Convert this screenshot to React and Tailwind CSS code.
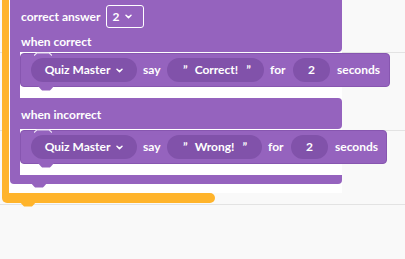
const purple = "bg-[#9563be]";

function Chevron({ className = "" }) {
  return (
    <svg width="7" height="5" viewBox="0 0 7 5" className={`shrink-0 ${className}`}>
      <path d="M1 1.2 L3.5 3.6 L6 1.2" fill="none" stroke="#fff" strokeWidth="1.5" strokeLinecap="round" strokeLinejoin="round" />
    </svg>
  );
}

function Tab({ color, className = "" }) {
  return (
    <svg width="16" height="5" viewBox="0 0 16 5" className={`absolute ${className}`}>
      <path d="M0 0 L3 3.4 Q4 4.6 5.5 4.6 L10.5 4.6 Q12 4.6 13 3.4 L16 0 Z" fill={color} />
    </svg>
  );
}

function Pill({ children, className = "" }) {
  return (
    <div className={`flex h-[24px] shrink-0 items-center justify-center whitespace-nowrap rounded-full bg-[#8152aa] ${className}`}>
      {children}
    </div>
  );
}

function SayBlock({ text, textWidth, width }) {
  return (
    <div
      className={`relative flex h-[34px] items-center whitespace-nowrap rounded-[4px] border border-[#8756b0] ${purple} pl-[10px] text-[12px] font-bold text-white`}
      style={{ width }}
    >
      <svg width="18" height="4" viewBox="0 0 18 4" className="absolute left-[13px] top-[-2px]">
        <path d="M0 3.5 L3 0.8 L15 0.8 L18 3.5" fill="none" stroke="#efe6f7" strokeWidth="1.2" />
      </svg>
      <Pill className="w-[106px]">
        <span>Quiz Master</span>
        <Chevron className="ml-[6px]" />
      </Pill>
      <span className="ml-[6px] w-[17px] shrink-0">say</span>
      <Pill className="ml-[7px]">
        <div className="flex items-center" style={{ width: textWidth }}>
          <span className="ml-[16px]">”</span>
          <span className="ml-[7px]">{text}</span>
          <span className="ml-[8px]">”</span>
        </div>
      </Pill>
      <span className="ml-[6px] w-[16px] shrink-0">for</span>
      <Pill className="ml-[7px] w-[37px]">2</Pill>
      <span className="ml-[7px] shrink-0">seconds</span>
      <Tab color="#9563be" className="left-[17px] bottom-[-5px]" />
    </div>
  );
}

export default function App() {
  return (
    <div className="relative h-[259px] w-[405px] overflow-hidden bg-[#f9f9f9] font-['Lato',sans-serif]">
      <div className="absolute left-0 right-0 top-[52px] h-px bg-[#e3e3e3]" />
      <div className="absolute left-0 right-0 top-[130px] h-px bg-[#e3e3e3]" />
      <div className="absolute left-0 right-0 top-[204px] h-px bg-[#e3e3e3]" />

      <div className="relative pl-[2px]">
        <div className="flex">
          <div className="w-[7px] shrink-0 bg-[#ffb42b]" />
          <div className="w-[333px] shrink-0 bg-white pb-[9px] pl-[1px]">
            <div className="relative w-[332px]">
              <div className={`flex h-[52px] flex-col whitespace-nowrap rounded-br-[4px] ${purple} pl-[11px] pt-[5px] text-[12px] font-bold text-white`}>
                <div className="flex h-[23px] items-center">
                  <span>correct answer</span>
                  <div className="ml-[6px] flex h-[23px] items-center rounded-[3px] border border-white pl-[5px] pr-[11px]">
                    <span>2</span>
                    <Chevron className="ml-[6px]" />
                  </div>
                </div>
                <span className="mt-[5px]">when correct</span>
              </div>

              <div className="flex">
                <div className={`w-[10px] shrink-0 ${purple}`} />
                <div className="pb-[11px] pt-[1px]">
                  <SayBlock text="Correct!" textWidth="97px" width="370px" />
                </div>
              </div>

              <div className={`flex h-[31px] items-center whitespace-nowrap rounded-r-[4px] ${purple} pl-[11px] text-[12px] font-bold text-white`}>
                <span className="mt-[2px]">when incorrect</span>
              </div>

              <div className="flex">
                <div className={`w-[10px] shrink-0 ${purple}`} />
                <div className="pb-[11px] pt-[1px]">
                  <SayBlock text="Wrong!" textWidth="95px" width="367px" />
                </div>
              </div>

              <div className={`relative h-[9px] rounded-b-[4px] ${purple}`}>
                <Tab color="#9563be" className="left-[21px] bottom-[-4px]" />
              </div>
            </div>
          </div>
        </div>
        <div className="relative h-[10px] w-[213px] rounded-r-[5px] rounded-bl-[5px] bg-[#ffb42b]">
          <Tab color="#ffb42b" className="left-[18px] bottom-[-4px]" />
        </div>
      </div>
    </div>
  );
}
